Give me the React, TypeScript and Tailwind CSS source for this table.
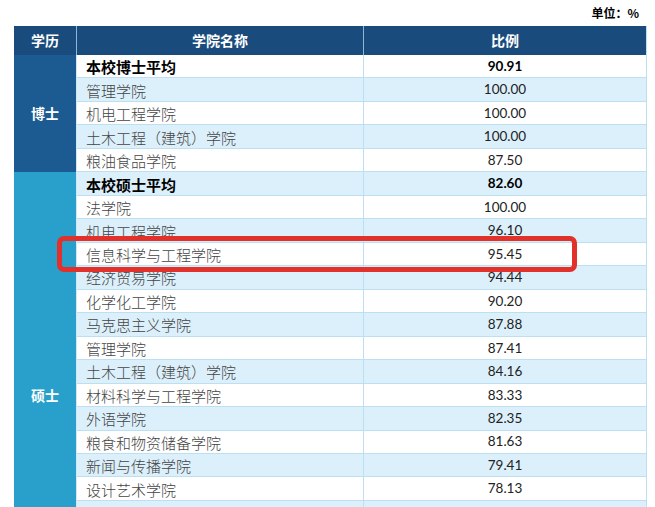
type Row = { name: string; value: string; bold?: boolean };

const doctor: Row[] = [
  { name: '本校博士平均', value: '90.91', bold: true },
  { name: '管理学院', value: '100.00' },
  { name: '机电工程学院', value: '100.00' },
  { name: '土木工程（建筑）学院', value: '100.00' },
  { name: '粮油食品学院', value: '87.50' },
];

const master: Row[] = [
  { name: '本校硕士平均', value: '82.60', bold: true },
  { name: '法学院', value: '100.00' },
  { name: '机电工程学院', value: '96.10' },
  { name: '信息科学与工程学院', value: '95.45' },
  { name: '经济贸易学院', value: '94.44' },
  { name: '化学化工学院', value: '90.20' },
  { name: '马克思主义学院', value: '87.88' },
  { name: '管理学院', value: '87.41' },
  { name: '土木工程（建筑）学院', value: '84.16' },
  { name: '材料科学与工程学院', value: '83.33' },
  { name: '外语学院', value: '82.35' },
  { name: '粮食和物资储备学院', value: '81.63' },
  { name: '新闻与传播学院', value: '79.41' },
  { name: '设计艺术学院', value: '78.13' },
  { name: '', value: '' },
  { name: '', value: '' },
  { name: '', value: '' },
  { name: '', value: '' },
  { name: '', value: '' },
];

const cjk = "font-['Noto_Sans_CJK_SC',sans-serif]";

function DataRow({ row, shaded }: { row: Row; shaded: boolean }) {
  return (
    <div
      className={`flex h-[23.47px] border-b border-[#bcdff1] ${shaded ? 'bg-[#dcf0fb]' : 'bg-white'}`}
    >
      <div
        className={`w-[287px] flex items-center pl-[9px] pt-[1px] border-r border-[#bcdff1] text-[15px] leading-none ${cjk} ${
          row.bold ? 'font-bold text-black' : 'font-light text-[#444]'
        }`}
      >
        {row.name}
      </div>
      <div
        className={`flex-1 flex items-center justify-center pt-[1px] text-[13.5px] leading-none font-['Lato',sans-serif] ${
          row.bold ? 'font-bold text-black' : 'text-[#222]'
        }`}
      >
        {row.value}
      </div>
    </div>
  );
}

function Group({ label, rows, color, startShaded }: { label: string; rows: Row[]; color: string; startShaded: boolean }) {
  return (
    <div className="flex">
      <div
        className={`w-[63px] shrink-0 flex items-center justify-center text-white font-bold text-[14px] border-r border-[#cfe8f5] ${cjk} ${color}`}
      >
        {label}
      </div>
      <div className="flex-1 flex flex-col">
        {rows.map((r, i) => (
          <DataRow key={i} row={r} shaded={startShaded ? i % 2 === 0 : i % 2 === 1} />
        ))}
      </div>
    </div>
  );
}

export default function App() {
  return (
    <div className="relative w-[655px] h-[507px] overflow-hidden bg-white">
      <div className={`h-[26px] flex justify-end items-start pt-[4px] pr-[16px] text-[12px] font-bold text-black ${cjk}`}>
        单位：%
      </div>
      <div className="ml-[14px] w-[633px] border-r border-[#bcdff1]">
        <div className={`flex h-[29px] bg-[#1a4b7d] text-white font-bold text-[14px] ${cjk}`}>
          <div className="w-[63px] flex items-center justify-center border-r border-[#8fb6d6]">学历</div>
          <div className="w-[287px] flex items-center justify-center border-r border-[#8fb6d6]">学院名称</div>
          <div className="flex-1 flex items-center justify-center">比例</div>
        </div>
        <Group label="博士" rows={doctor} color="bg-[#1b5b91]" startShaded={false} />
        <Group label="硕士" rows={master} color="bg-[#29a0cb]" startShaded={true} />
      </div>
      <div className="absolute left-[57px] top-[236px] w-[520px] h-[36px] border-[5px] border-[#e2302b] rounded-[7px]" />
    </div>
  );
}
